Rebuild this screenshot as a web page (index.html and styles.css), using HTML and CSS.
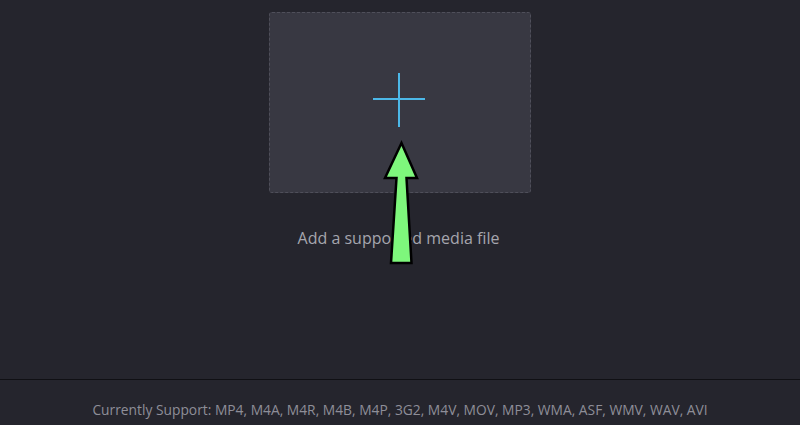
FILE: index.html
```html
<!DOCTYPE html>
<html>
<head>
  <meta charset="utf-8">
  <link rel="stylesheet" href="styles.css">
</head>
<body>
  <div class="app">
    <div class="main">
      <div class="dropzone">
        <svg class="plus" width="54" height="56" viewBox="0 0 54 56">
          <path d="M27 1 V55 M1 27 H53" stroke="#4cb8e8" stroke-width="2" fill="none"/>
        </svg>
      </div>
      <p class="hint">Add a supported media file</p>
      <svg class="pointer" width="50" height="130" viewBox="0 0 50 130">
        <polygon points="21.5,3 5,38 16.5,38 11,123 31.5,123 26.5,38 37,38"
          fill="#7ef77c" stroke="#000" stroke-width="2.5" stroke-linejoin="miter"/>
      </svg>
    </div>
    <div class="footer">Currently Support: MP4, M4A, M4R, M4B, M4P, 3G2, M4V, MOV, MP3, WMA, ASF, WMV, WAV, AVI</div>
  </div>
</body>
</html>
```

FILE: styles.css
```css
*, *:before, *:after { box-sizing: border-box; }
html, body { height: 100%; }
body { margin: 0; padding: 0; background-color: #25252d; font-family: "Open Sans", sans-serif; }
.app { display: flex; flex-direction: column; height: 100%; }

.main {
  position: relative;
  height: 380px;
  display: flex;
  flex-direction: column;
  align-items: center;
  border-bottom: 1px solid #101014;
}

.dropzone {
  width: 262px;
  height: 181px;
  margin-top: 12px;
  background-color: #383842;
  border: 1px dashed #4f4f5a;
  border-radius: 3px;
  display: flex;
  align-items: center;
  justify-content: center;
}

.plus { display: block; margin-left: -3px; margin-top: -5px; }

.hint {
  margin: 34px 0 0 -3px;
  font-size: 16px;
  color: #a6a6ae;
}

.pointer { position: absolute; left: 380px; top: 140px; }

.footer {
  flex: 1;
  display: flex;
  align-items: center;
  justify-content: center;
  padding-top: 13px;
  font-size: 13.8px;
  color: #8e8e98;
}
```
